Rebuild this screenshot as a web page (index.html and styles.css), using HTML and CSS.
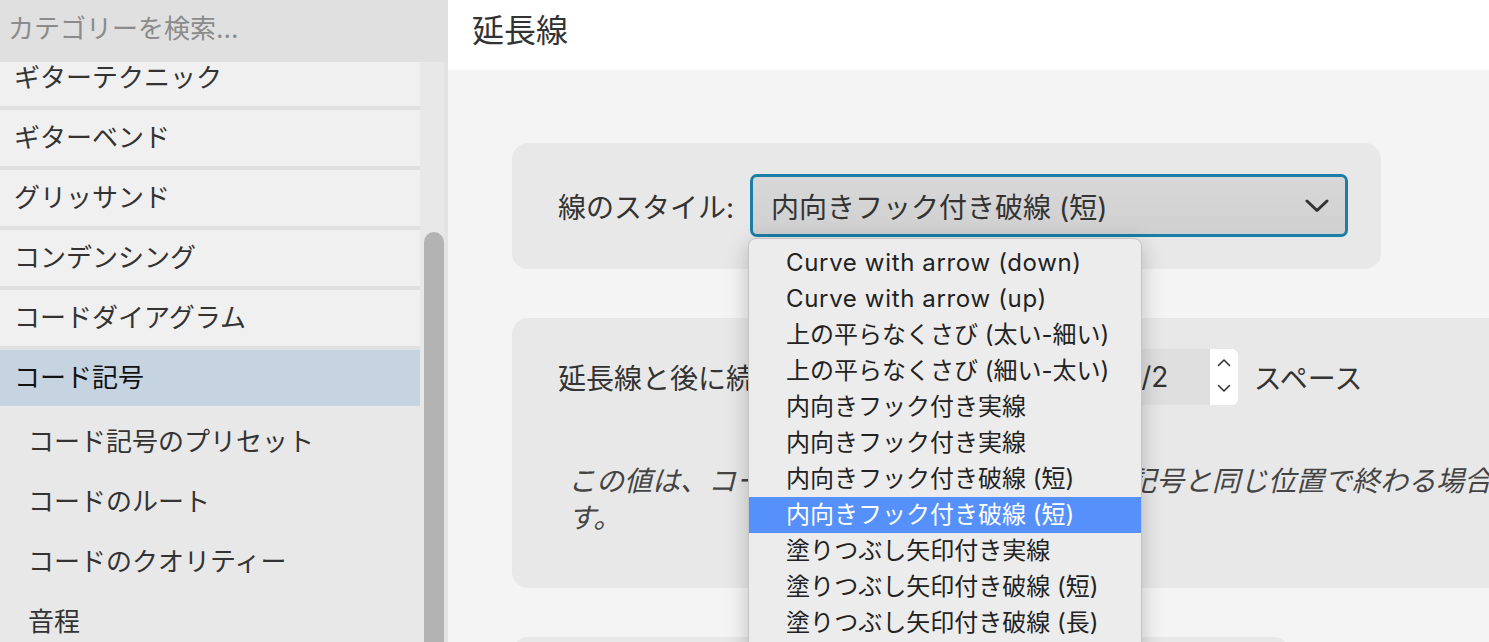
FILE: index.html
```html
<!DOCTYPE html>
<html lang="ja">
<head>
    <meta charset="UTF-8">
    <meta name="viewport" content="width=device-width, initial-scale=1.0">
    <title>延長線</title>
    <link rel="stylesheet" href="styles.css">
</head>
<body>
    <aside class="sidebar">
        <input class="search" type="text" placeholder="カテゴリーを検索...">

        <div class="list-wrap">
            <ul class="list">
                <li class="item">ギターテクニック</li>
                <li class="item">ギターベンド</li>
                <li class="item">グリッサンド</li>
                <li class="item">コンデンシング</li>
                <li class="item">コードダイアグラム</li>
                <li class="item active">コード記号</li>
                <li class="subs">
                    <div class="sub">コード記号のプリセット</div>
                    <div class="sub">コードのルート</div>
                    <div class="sub">コードのクオリティー</div>
                    <div class="sub">音程</div>
                </li>
            </ul>
            <div class="track"><div class="thumb"></div></div>
        </div>
    </aside>

    <main>
        <header>
            <h1>延長線</h1>
        </header>

        <div class="content">
            <section class="card card-style">
                <label>線のスタイル:</label>
                <div class="select">
                    <span>内向きフック付き破線 (短)</span>
                    <svg class="chevron" width="24" height="14" viewBox="0 0 24 14">
                        <polyline points="2,2 12,11.5 22,2" fill="none" stroke="#333" stroke-width="3" stroke-linecap="round" stroke-linejoin="round"/>
                    </svg>

                    <!-- open dropdown -->
                    <ul class="menu">
                        <li class="latin">Curve with arrow (down)</li>
                        <li class="latin">Curve with arrow (up)</li>
                        <li>上の平らなくさび (太い-細い)</li>
                        <li>上の平らなくさび (細い-太い)</li>
                        <li>内向きフック付き実線</li>
                        <li>内向きフック付き実線</li>
                        <li>内向きフック付き破線 (短)</li>
                        <li class="hl">内向きフック付き破線 (短)</li>
                        <li>塗りつぶし矢印付き実線</li>
                        <li>塗りつぶし矢印付き破線 (短)</li>
                        <li>塗りつぶし矢印付き破線 (長)</li>
                        <li>塗りつぶし矢印付き点線</li>
                    </ul>
                </div>
            </section>

            <section class="card card-gap">
                <div class="row">
                    <label>延長線と後に続くコード記号との最小距離:</label>
                    <div class="num">
                        <input type="text" value="1/2">
                        <div class="spin">
                            <svg width="28" height="56" viewBox="0 0 28 56">
                                <polyline points="8.5,16.5 14,11 19.5,16.5" fill="none" stroke="#333" stroke-width="1.6" stroke-linecap="round" stroke-linejoin="round"/>
                                <polyline points="8.5,36.5 14,42 19.5,36.5" fill="none" stroke="#333" stroke-width="1.6" stroke-linecap="round" stroke-linejoin="round"/>
                            </svg>
                        </div>
                    </div>
                    <span class="unit">スペース</span>
                </div>
                <p class="note">この値は、コード記号の延長線が次のコード記号と同じ位置で終わる場合に使用されます。</p>
            </section>

            <section class="card card-next"></section>
        </div>
    </main>
</body>
</html>
```

FILE: styles.css
```css
* {
    box-sizing: border-box;
}

body {
    margin: 0;
    height: 100vh;
    display: flex;
    overflow: hidden;
    background-color: #f4f4f4;
    color: #333;
    font-family: Inter, "Noto Sans CJK JP", sans-serif;
}

/* sidebar */

.sidebar {
    width: 448px;
    flex-shrink: 0;
    display: flex;
    flex-direction: column;
    background: #e8e8e8;
}

.search {
    all: unset;
    display: block;
    box-sizing: border-box;
    height: 62px;
    padding: 0 8px 6px 8px;
    background: #e0e0e0;
    font-size: 26px;
    color: #333;
    font-family: Inter, "Noto Sans CJK JP", sans-serif;
}

.search::placeholder {
    color: #8b8b8b;
}

.list-wrap {
    flex: 1;
    display: flex;
    overflow: hidden;
}

.list {
    list-style: none;
    margin: -12px 0 0 0;
    padding: 0;
    width: 420px;
    flex-shrink: 0;
}

.item {
    height: 60px;
    line-height: 56px;
    padding-left: 14px;
    font-size: 26px;
    background: #f0f0f0;
    border-bottom: 4px solid #e0e0e0;
}

.item.active {
    background: #c6d4e1;
    color: #111;
    border-bottom-color: #e8e8e8;
}

.subs {
    padding-top: 2px;
}

.sub {
    height: 60px;
    line-height: 60px;
    padding-left: 28px;
    font-size: 26px;
}

.track {
    width: 28px;
    background: #e8e8e8;
    border-right: 4px solid #e3e3e3;
}

.thumb {
    margin: 170px 0 0 4px;
    width: 20px;
    height: 600px;
    border-radius: 10px;
    background: #b3b3b3;
}

/* main */

main {
    flex: 1;
    display: flex;
    flex-direction: column;
    min-width: 0;
}

header {
    height: 70px;
    flex-shrink: 0;
    background: #fff;
    padding-left: 24px;
}

h1 {
    margin: 0;
    font-size: 32px;
    font-weight: normal;
    line-height: 62px;
    color: #333;
}

.content {
    flex: 1;
    overflow: hidden;
    padding: 73px 0 0 64px;
    display: flex;
    flex-direction: column;
    align-items: flex-start;
    gap: 49px;
}

.card {
    flex-shrink: 0;
    background: #e8e8e8;
    border-radius: 16px;
}

label {
    font-size: 28px;
    margin-right: 16px;
    white-space: nowrap;
}

.card-style {
    display: flex;
    align-items: center;
    padding: 31px 33px 32px 46px;
}

.select {
    position: relative;
    width: 598px;
    height: 63px;
    display: flex;
    align-items: center;
    justify-content: space-between;
    padding: 0 16px 0 18px;
    border: 3px solid #1a7ea6;
    border-radius: 7px;
    background: linear-gradient(#d8d8d8, #d0d0d0);
    font-size: 28px;
}

.menu {
    position: absolute;
    left: -5px;
    top: 61px;
    z-index: 10;
    width: 394px;
    margin: 0;
    padding: 6px 0;
    list-style: none;
    background: #ececec;
    border: 1px solid #c4c4c4;
    border-radius: 8px;
    box-shadow: 0 6px 22px rgba(0, 0, 0, 0.22);
}

.menu li {
    height: 36px;
    line-height: 36px;
    padding-left: 37px;
    font-size: 24px;
    color: #222;
    white-space: nowrap;
}

.menu li.latin {
    letter-spacing: 0.65px;
}

.menu li.hl {
    background: #5590fb;
    color: #fff;
}

.card-gap {
    width: 1200px;
    padding: 31px 46px 51px 46px;
}

.row {
    display: flex;
    align-items: center;
}

.num {
    display: flex;
    height: 56px;
}

.num input {
    all: unset;
    box-sizing: border-box;
    width: 96px;
    height: 56px;
    padding-left: 16px;
    background: #dfdfdf;
    border-radius: 6px 0 0 6px;
    font-size: 28px;
    color: #333;
    font-family: Inter, "Noto Sans CJK JP", sans-serif;
}

.spin {
    width: 28px;
    background: #fff;
    border-radius: 0 6px 6px 0;
}

.spin svg {
    display: block;
}

.unit {
    margin-left: 16px;
    font-size: 28px;
}

.note {
    margin: 58px 0 0 10px;
    width: 1110px;
    font-size: 28px;
    line-height: 37px;
    font-style: italic;
    color: #444;
}

.card-next {
    width: 778px;
    height: 200px;
}
```
